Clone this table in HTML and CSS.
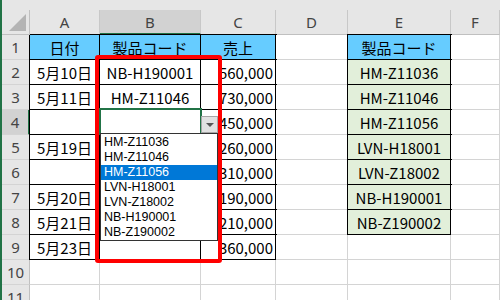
FILE: index.html
```html
<!DOCTYPE html>
<html lang="ja">
<head>
    <meta charset="UTF-8">
    <meta name="viewport" content="width=device-width, initial-scale=1.0">
    <title>入力規則のドロップダウン</title>
    <link rel="stylesheet" href="styles.css">
</head>
<body>
    <div class="sheet">
        <div class="grid">
            <!-- column headers -->
            <div class="corner"><span class="tri"></span></div>
            <div class="ch">A</div>
            <div class="ch sel">B</div>
            <div class="ch">C</div>
            <div class="ch">D</div>
            <div class="ch">E</div>
            <div class="ch">F</div>

            <div class="rh">1</div>
            <div class="c t head">日付</div>
            <div class="c t head">製品コード</div>
            <div class="c t head">売上</div>
            <div class="c"></div>
            <div class="c t head">製品コード</div>
            <div class="c"></div>

            <div class="rh">2</div>
            <div class="c t">5月10日</div>
            <div class="c t">NB-H190001</div>
            <div class="c t num">560,000</div>
            <div class="c"></div>
            <div class="c t list">HM-Z11036</div>
            <div class="c"></div>

            <div class="rh">3</div>
            <div class="c t">5月11日</div>
            <div class="c t">HM-Z11046</div>
            <div class="c t num">730,000</div>
            <div class="c"></div>
            <div class="c t list">HM-Z11046</div>
            <div class="c"></div>

            <div class="rh sel">4</div>
            <div class="c t"></div>
            <div class="c t"></div>
            <div class="c t num">450,000</div>
            <div class="c"></div>
            <div class="c t list">HM-Z11056</div>
            <div class="c"></div>

            <div class="rh">5</div>
            <div class="c t">5月19日</div>
            <div class="c t"></div>
            <div class="c t num">260,000</div>
            <div class="c"></div>
            <div class="c t list">LVN-H18001</div>
            <div class="c"></div>

            <div class="rh">6</div>
            <div class="c t"></div>
            <div class="c t"></div>
            <div class="c t num">310,000</div>
            <div class="c"></div>
            <div class="c t list">LVN-Z18002</div>
            <div class="c"></div>

            <div class="rh">7</div>
            <div class="c t">5月20日</div>
            <div class="c t"></div>
            <div class="c t num">190,000</div>
            <div class="c"></div>
            <div class="c t list">NB-H190001</div>
            <div class="c"></div>

            <div class="rh">8</div>
            <div class="c t">5月21日</div>
            <div class="c t"></div>
            <div class="c t num">210,000</div>
            <div class="c"></div>
            <div class="c t list">NB-Z190002</div>
            <div class="c"></div>

            <div class="rh">9</div>
            <div class="c t">5月23日</div>
            <div class="c t"></div>
            <div class="c t num">360,000</div>
            <div class="c"></div>
            <div class="c"></div>
            <div class="c"></div>

            <div class="rh">10</div>
            <div class="c"></div>
            <div class="c"></div>
            <div class="c"></div>
            <div class="c"></div>
            <div class="c"></div>
            <div class="c"></div>

            <div class="rh">11</div>
            <div class="c"></div>
            <div class="c"></div>
            <div class="c"></div>
            <div class="c"></div>
            <div class="c"></div>
            <div class="c"></div>
        </div>
    </div>

    <!-- active cell B4 with its validation list -->
    <div class="active"></div>
    <div class="drop-btn"><span class="arrow"></span></div>
    <ul class="dropdown">
        <li>HM-Z11036</li>
        <li>HM-Z11046</li>
        <li class="hl">HM-Z11056</li>
        <li>LVN-H18001</li>
        <li>LVN-Z18002</li>
        <li>NB-H190001</li>
        <li>NB-Z190002</li>
    </ul>

    <div class="mark"></div>
</body>
</html>
```

FILE: styles.css
```css
* {
    margin: 0;
    padding: 0;
    box-sizing: border-box;
}

body {
    position: relative;
    width: 500px;
    height: 300px;
    overflow: hidden;
    background: #fff;
    font-family: "Noto Sans CJK JP", sans-serif;
    color: #000;
}

.sheet {
    border-left: 2px solid #217346;
    padding-top: 10px;
    background: #e6e6e6;
    height: 300px;
}

.grid {
    display: grid;
    grid-template-columns: 28px 70px 101px 75px 72px 103px 1fr;
    grid-template-rows: 25px;
    grid-auto-rows: 25px;
}

/* headers */
.corner {
    position: relative;
    background: #e6e6e6;
    border-right: 1px solid #c0c0c0;
    border-bottom: 1px solid #c0c0c0;
}

.tri {
    position: absolute;
    right: 3px;
    bottom: 3px;
    width: 0;
    height: 0;
    border-left: 17px solid transparent;
    border-bottom: 17px solid #b4b4b4;
}

.ch {
    display: flex;
    align-items: center;
    justify-content: center;
    background: #e6e6e6;
    border-right: 1px solid #c8c8c8;
    border-bottom: 1px solid #c0c0c0;
    font-family: "Noto Sans", sans-serif;
    font-size: 15px;
    color: #444;
}

.ch.sel {
    background: #d2d2d2;
    border-bottom: 2px solid #217346;
}

.rh {
    display: flex;
    align-items: center;
    justify-content: center;
    background: #e6e6e6;
    border-right: 1px solid #c0c0c0;
    border-bottom: 1px solid #d4d4d4;
    font-family: "Noto Sans", sans-serif;
    font-size: 15px;
    color: #444;
}

.rh.sel {
    background: #d2d2d2;
    border-right: 2px solid #217346;
}

/* cells */
.c {
    display: flex;
    align-items: center;
    justify-content: center;
    background: #fff;
    border-right: 1px solid #d4d4d4;
    border-bottom: 1px solid #d4d4d4;
    font-size: 15px;
    white-space: nowrap;
    overflow: hidden;
}

.c.t {
    border-right-color: #000;
    border-bottom-color: #000;
    box-shadow: 0 0 0 1px #000;
}

.c.head {
    background: #66ccff;
}

.c.list {
    background: #e2efda;
}

.c.num {
    justify-content: flex-end;
    padding-right: 2px;
}

/* active cell and list */
.active {
    position: absolute;
    left: 99px;
    top: 108px;
    width: 103px;
    height: 27px;
    border: 2px solid #217346;
}

.drop-btn {
    position: absolute;
    left: 201px;
    top: 116px;
    width: 17px;
    height: 17px;
    background: #e1e1e1;
    border: 1px solid #a6a6a6;
    display: flex;
    align-items: center;
    justify-content: center;
}

.arrow {
    width: 0;
    height: 0;
    border-left: 4px solid transparent;
    border-right: 4px solid transparent;
    border-top: 4px solid #555;
}

.dropdown {
    position: absolute;
    left: 100px;
    top: 133px;
    width: 118px;
    height: 108px;
    list-style: none;
    background: #fff;
    border: 1px solid #333;
    padding-top: 1px;
    font-family: "Liberation Sans", sans-serif;
    font-size: 12.5px;
}

.dropdown li {
    height: 15px;
    line-height: 15px;
    padding-left: 3px;
    white-space: nowrap;
}

.dropdown li.hl {
    background: #0078d7;
    color: #fff;
}

.mark {
    position: absolute;
    left: 95px;
    top: 55px;
    width: 127px;
    height: 208px;
    border: 4px solid #ff0000;
    border-radius: 3px;
}
```
